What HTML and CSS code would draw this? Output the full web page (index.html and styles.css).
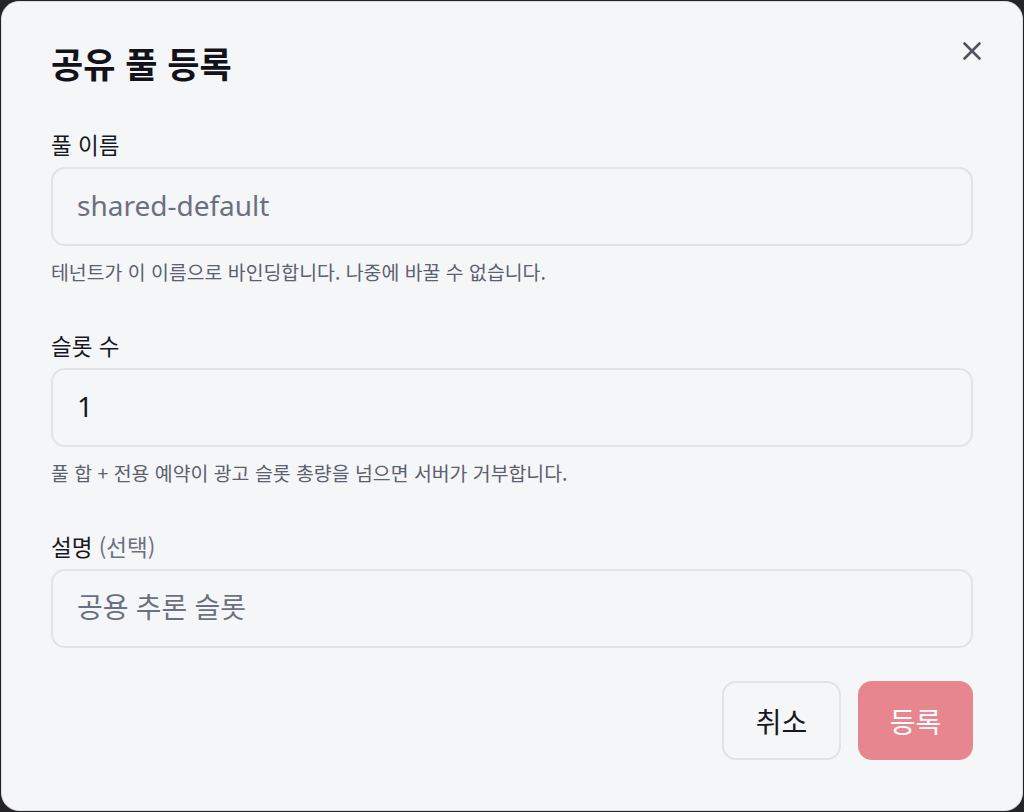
FILE: index.html
```html
<!DOCTYPE html>
<html lang="ko">
<head>
<meta charset="utf-8">
<title>공유 풀 등록</title>
<link rel="stylesheet" href="styles.css">
</head>
<body>
<div class="dialog">
  <div class="header">
    <h1 class="title">공유 풀 등록</h1>
    <button class="close" aria-label="닫기">
      <svg width="20" height="20" viewBox="0 0 20 20"><path d="M2.5 2.5 L17.5 17.5 M17.5 2.5 L2.5 17.5" stroke="#50545c" stroke-width="2.6" stroke-linecap="round" fill="none"/></svg>
    </button>
  </div>
  <div class="field">
    <label class="label">풀 이름</label>
    <input class="input" type="text" placeholder="shared-default">
    <p class="help">테넌트가 이 이름으로 바인딩합니다. 나중에 바꿀 수 없습니다.</p>
  </div>
  <div class="field">
    <label class="label">슬롯 수</label>
    <input class="input" type="text" value="1">
    <p class="help">풀 합 + 전용 예약이 광고 슬롯 총량을 넘으면 서버가 거부합니다.</p>
  </div>
  <div class="field">
    <label class="label">설명 <span class="opt">(선택)</span></label>
    <input class="input" type="text" placeholder="공용 추론 슬롯">
  </div>
  <div class="actions">
    <button class="btn btn-cancel">취소</button>
    <button class="btn btn-primary">등록</button>
  </div>
</div>
</body>
</html>
```
FILE: styles.css
```css
* { box-sizing: border-box; }
html, body { margin: 0; padding: 0; }
body {
  background: #242424;
  width: 1024px;
  height: 812px;
  overflow: hidden;
  font-family: "Noto Sans CJK KR", "Noto Sans", sans-serif;
  color: #16181d;
}
.dialog {
  margin: 1px;
  width: 1022px;
  height: 810px;
  background: #f5f6f8;
  border: 1px solid #dcdee2;
  border-radius: 18px;
  padding: 30px 49px 0 49px;
  display: flex;
  flex-direction: column;
}
.header {
  display: flex;
  justify-content: space-between;
  align-items: flex-start;
  height: 76px;
}
.title {
  margin: 0;
  font-size: 35px;
  font-weight: 700;
  line-height: 72px;
  margin-top: -5px;
  color: #111318;
}
.close {
  border: none;
  background: none;
  padding: 0;
  margin: 9px -9px 0 0;
  width: 20px;
  height: 20px;
  display: flex;
}
.field {
  display: flex;
  flex-direction: column;
}
.field + .field { margin-top: 23px; }
.label {
  font-size: 22.5px;
  line-height: 30px;
  margin-top: 21px;
  margin-bottom: 8px;
  color: #16181d;
}
.opt { color: #6b7080; }
.input {
  height: 79px;
  width: 100%;
  border: 2px solid #e1e3e7;
  border-radius: 14px;
  background: #f5f6f8;
  padding: 0 24px 3px 24px;
  font-family: "Noto Sans", "Noto Sans CJK KR", sans-serif;
  font-size: 28px;
  color: #16181d;
  outline: none;
}
.input::placeholder { color: #6b7080; }
.help {
  margin: 12px 0 0 0;
  font-size: 19.4px;
  line-height: 28px;
  color: #5b616e;
}
.actions {
  display: flex;
  justify-content: flex-end;
  gap: 17px;
  margin-top: 33px;
}
.btn {
  height: 79px;
  border-radius: 14px;
  font-family: inherit;
  font-size: 28px;
  padding: 0;
}
.btn-cancel {
  width: 119px;
  border: 2px solid #e1e3e7;
  background: #f5f6f8;
  color: #16181d;
}
.btn-primary {
  width: 115px;
  border: none;
  background: #e8868f;
  color: #fff;
}
```
